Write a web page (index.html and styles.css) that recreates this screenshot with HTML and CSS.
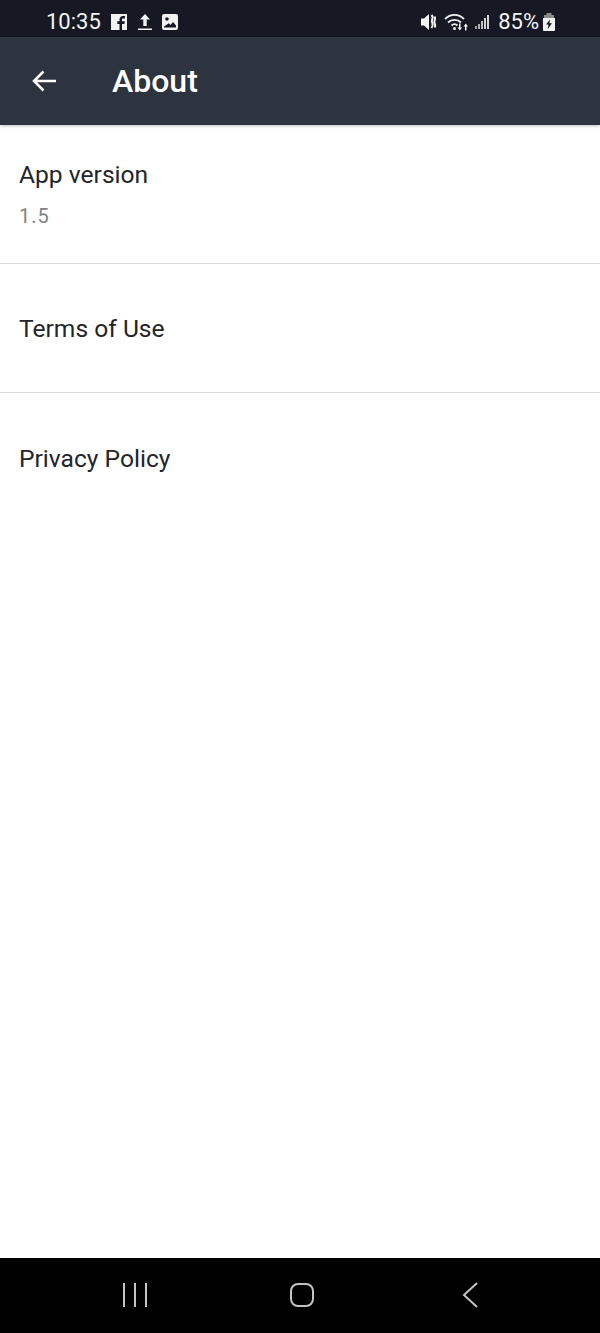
FILE: index.html
```html
<!DOCTYPE html>
<html lang="en">

<head>
    <meta charset="utf-8">
    <meta name="viewport" content="width=device-width, initial-scale=1.0">
    <title>About</title>
    <link rel="stylesheet" href="styles.css">
</head>

<body>
    <div class="status-bar">
        <div class="status-left">
            <span class="clock">10:35</span>
            <svg class="icon-fb" width="18" height="18" viewBox="0 0 18 18">
                <path fill="#f2f2f2" d="M1 1h16v16h-5v-6h2.400l.4-2.800H12V6.800c0-.8.3-1.300 1.400-1.300H15V3.100c-.5-.1-1.200-.1-2-.1-2 0-3.500 1.200-3.500 3.500v1.700H7.300V11h2.200v6H1z"/>
            </svg>
            <svg class="icon-upload" width="16" height="18" viewBox="0 0 16 18">
                <path fill="#f2f2f2" d="M9 1l5 5.500h-3.300V13H7.300V6.500H4z"/>
                <rect x="2" y="15.500" width="14" height="1.500" fill="#f2f2f2"/>
            </svg>
            <svg class="icon-image" width="18" height="18" viewBox="0 0 18 18">
                <path fill="#f2f2f2" fill-rule="evenodd" d="M3 1h12a2 2 0 0 1 2 2v12a2 2 0 0 1-2 2H3a2 2 0 0 1-2-2V3a2 2 0 0 1 2-2zM3 14.500h12v-2l-3-3.500-2.500 3-1.700-1.800-4.800 3.300zM6 4.200a1.800 1.800 0 1 0 0 3.600 1.800 1.800 0 0 0 0-3.600z"/>
            </svg>
        </div>
        <div class="status-right">
            <svg width="19" height="18" viewBox="0 0 19 18">
                <path fill="#f2f2f2" d="M2 5.500h3L10 1v16l-5-4.500H2z"/>
                <path fill="none" stroke="#f2f2f2" stroke-width="2" d="M12.500 2c1.500 1.500 1.500 2.500.8 4-.7 1.500-.7 2.500 0 4 .7 1.500.7 3-.8 5M15.500 3.500c1 1.500.8 2.500.3 3.500-.6 1.300-.6 2.500 0 3.800.5 1 .7 2.200-.3 3.700"/>
            </svg>
            <svg class="icon-wifi" width="25" height="18" viewBox="0 0 25 18">
                <g fill="none" stroke="#f2f2f2" stroke-width="1.800">
                    <path d="M1 6c5.500-5.500 13.500-5.500 19 0"/>
                    <path d="M4 9.500c3.500-3.500 9.500-3.500 13 0"/>
                    <path d="M7.500 12.500c2-1.800 4-1.800 6 0"/>
                </g>
                <circle cx="10.500" cy="15.500" r="1.500" fill="#f2f2f2"/>
                <path fill="#f2f2f2" d="M15 10.500h1.500v4H18l-2.200 3-2.300-3H15zM21 17.500h1.500v-4H24l-2.200-3-2.300 3H21z"/>
            </svg>
            <svg class="icon-signal" width="15" height="16" viewBox="0 0 15 16">
                <rect x="0" y="12" width="2" height="3" fill="#9a9a9a"/>
                <rect x="3" y="10" width="2" height="5" fill="#b0b0b0"/>
                <rect x="6" y="7" width="2" height="8" fill="#c0c0c0"/>
                <rect x="9" y="4" width="2" height="11" fill="#d0d0d0"/>
                <rect x="12" y="1" width="2" height="14" fill="#d8d8d8"/>
            </svg>
            <span class="battery-text">85%</span>
            <svg class="icon-battery" width="12" height="18" viewBox="0 0 12 18">
                <path fill="#8a8a8a" d="M3.500 0h5v2h-5zM1 2h10v3H1z"/>
                <path fill="#f2f2f2" fill-rule="evenodd" d="M0 5h12v12a1 1 0 0 1-1 1H1a1 1 0 0 1-1-1zM7 6.500L3 11.500h2.400L4.800 16 9 10.200H6.500z"/>
            </svg>
        </div>
    </div>

    <header class="app-bar">
        <svg class="back" width="26" height="24" viewBox="0 0 26 24">
            <path fill="none" stroke="#fff" stroke-width="2.500" d="M25 12H3M12.500 2.500L3 12l9.500 9.500"/>
        </svg>
        <h1>About</h1>
    </header>

    <main class="list">
        <div class="row row-version">
            <div class="row-title">App version</div>
            <div class="row-sub">1.5</div>
        </div>
        <div class="row">
            <div class="row-title">Terms of Use</div>
        </div>
        <div class="row">
            <div class="row-title">Privacy Policy</div>
        </div>
    </main>

    <nav class="nav-bar">
        <svg class="nav-recent" width="26" height="26" viewBox="0 0 26 26">
            <path fill="none" stroke="#c4c4c4" stroke-width="2" d="M2 1v24M13 1v24M24 1v24"/>
        </svg>
        <svg class="nav-home" width="26" height="26" viewBox="0 0 26 26">
            <rect x="2" y="2" width="22" height="22" rx="7" fill="none" stroke="#c4c4c4" stroke-width="2"/>
        </svg>
        <svg class="nav-back" width="16" height="26" viewBox="0 0 16 26">
            <path fill="none" stroke="#c4c4c4" stroke-width="2" d="M15 1L2 13l13 12"/>
        </svg>
    </nav>
</body>

</html>
```

FILE: styles.css
```css
* {
    margin: 0;
    padding: 0;
    box-sizing: border-box;
    font-family: Roboto, sans-serif;
}

body {
    width: 100%;
    height: 100vh;
    background: #FFFFFF;
    display: flex;
    flex-direction: column;
}

.status-bar {
    height: 37px;
    background: #161924;
    color: #F2F2F2;
    display: flex;
    justify-content: space-between;
    align-items: center;
    padding: 6px 45px 0 46px;
    flex-shrink: 0;
}

.status-left,
.status-right {
    display: flex;
    align-items: center;
}

.clock {
    font-size: 22px;
    margin-right: 9px;
}

.icon-upload {
    margin: 0 9px 0 8px;
}

.icon-wifi {
    margin-left: 6px;
}

.icon-signal {
    margin-left: 6px;
}

.battery-text {
    font-size: 22px;
    margin-left: 8px;
    margin-right: 4px;
}

.app-bar {
    height: 88px;
    background: #2E3340;
    display: flex;
    align-items: center;
    padding-left: 31px;
    box-shadow: 0 1px 3px rgba(0, 0, 0, .25);
    flex-shrink: 0;
    position: relative;
}

.app-bar h1 {
    color: #FFFFFF;
    font-size: 32px;
    font-weight: 500;
    margin-left: 55px;
}

.list {
    flex: 1;
}

.row {
    height: 129px;
    display: flex;
    flex-direction: column;
    justify-content: center;
    padding-left: 19px;
    border-bottom: 1px solid #DCDCDC;
}

.row:last-child {
    height: 131px;
    border-bottom: none;
}

.row-version {
    height: 139px;
}

.row-title {
    font-size: 24.6px;
    color: #23252B;
}

.row-sub {
    font-size: 20px;
    color: #80828A;
    margin-top: 15px;
    letter-spacing: 1px;
}

.nav-bar {
    height: 75px;
    background: #000000;
    display: flex;
    align-items: center;
    padding: 0 0 1px 122px;
    flex-shrink: 0;
}

.nav-home {
    margin-left: 141px;
}

.nav-back {
    margin-left: 147px;
}
```
